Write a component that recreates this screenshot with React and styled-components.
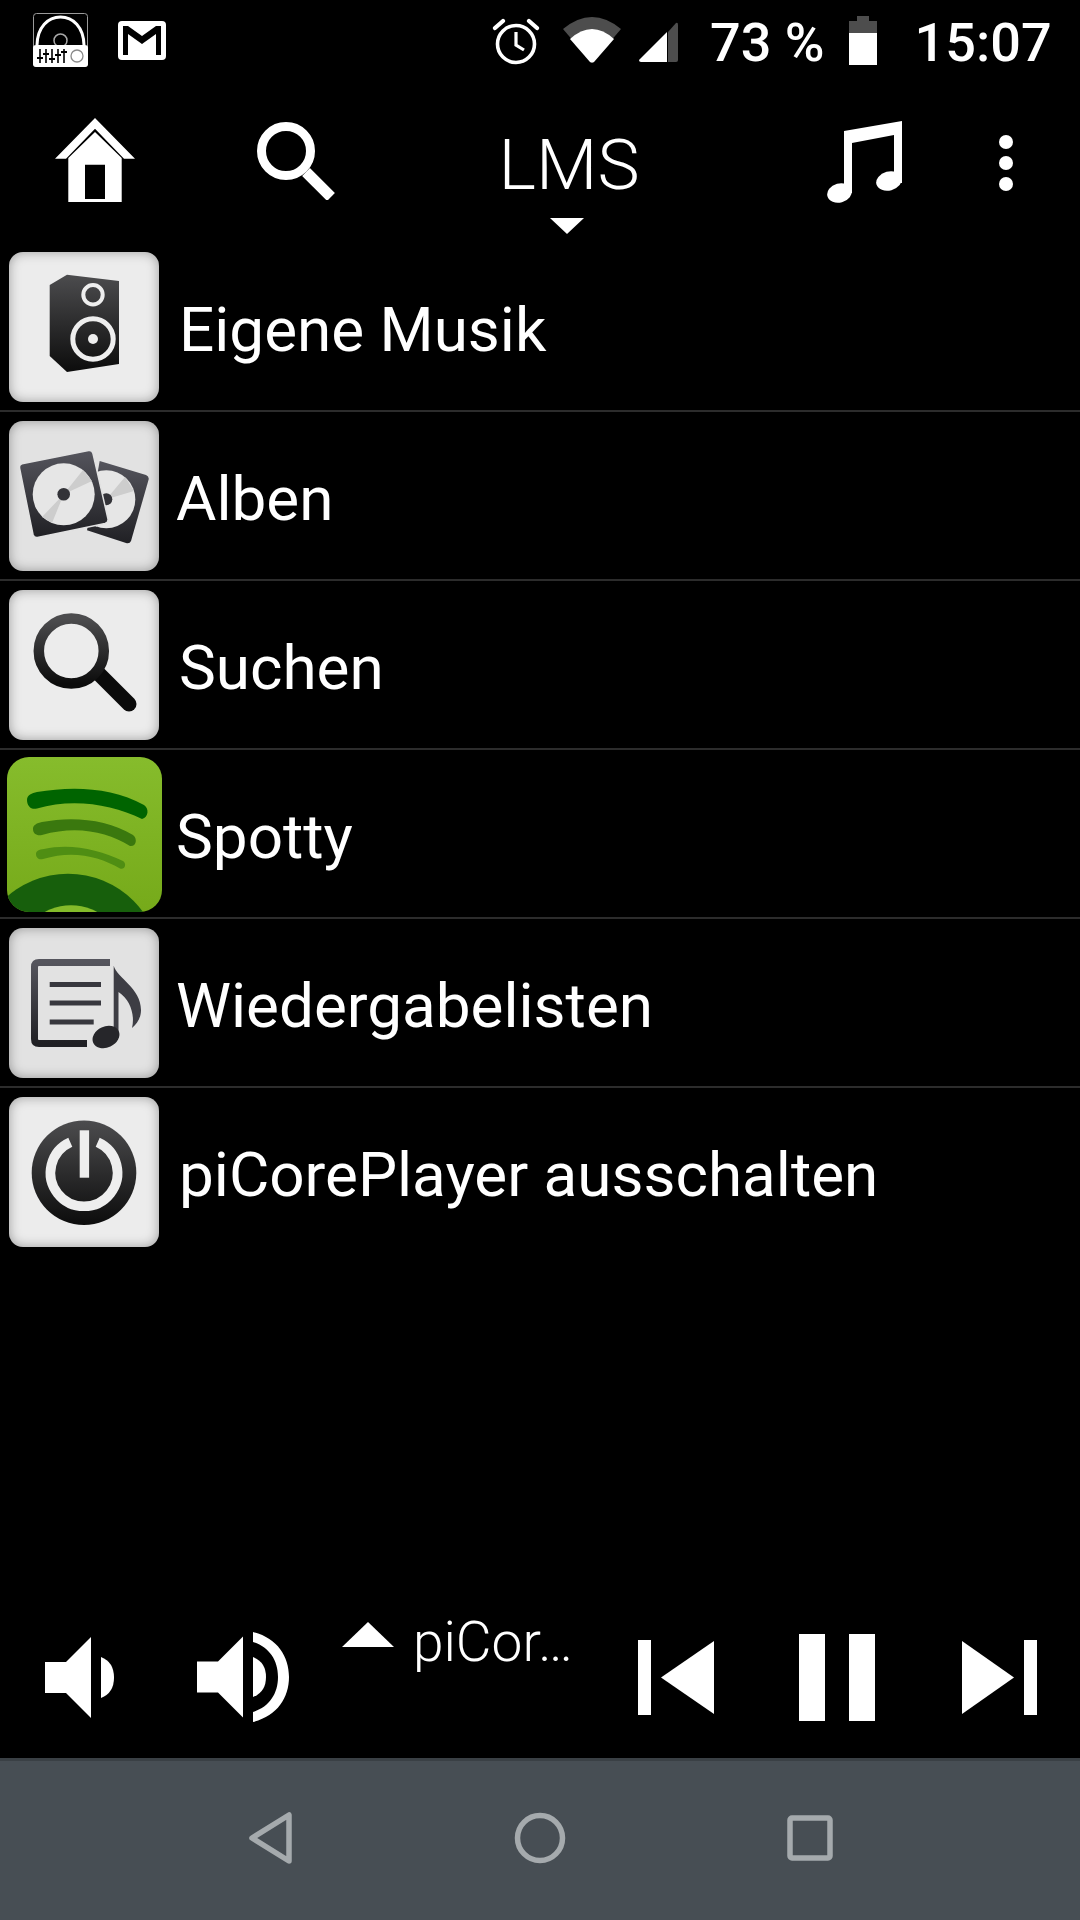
import React from 'react';
import styled, { createGlobalStyle } from 'styled-components';

const GlobalStyle = createGlobalStyle`
  html, body {
    margin: 0;
    padding: 0;
    background: #000;
  }
  body {
    font-family: Roboto, "Liberation Sans", sans-serif;
  }
`;

const Page = styled.div`
  width: 1080px;
  height: 1920px;
  display: flex;
  flex-direction: column;
  background: #000;
  color: #fff;
  overflow: hidden;
`;

const Glyph = styled.svg`
  display: block;
  flex: none;
  margin-left: ${(p) => p.$ml || 0}px;
  margin-top: ${(p) => p.$mt || 0}px;
`;

const StatusBar = styled.div`
  height: 72px;
  flex: none;
  display: flex;
  align-items: flex-start;
`;

const StatusText = styled.span`
  flex: none;
  margin-left: ${(p) => p.$ml}px;
  margin-top: 13px;
  font-size: 54px;
  font-weight: 500;
  line-height: 60px;
  white-space: nowrap;
`;

const Toolbar = styled.div`
  height: 171px;
  flex: none;
  display: flex;
  align-items: flex-start;
`;

const Source = styled.div`
  flex: none;
  width: 136px;
  margin-left: 166px;
  display: flex;
  flex-direction: column;
  align-items: center;
`;

const SourceName = styled.span`
  margin-top: 51px;
  font-size: 71px;
  font-weight: 300;
  line-height: 84px;
`;

const SourceArrow = styled.span`
  width: 0;
  height: 0;
  margin-top: 11px;
  margin-left: -4px;
  border-left: 17px solid transparent;
  border-right: 17px solid transparent;
  border-top: 16px solid #fff;
`;

const List = styled.div`
  flex: 1;
`;

const Row = styled.div`
  height: 167px;
  display: flex;
  align-items: flex-start;
  border-bottom: 2px solid #2c2c2c;
  &:last-child {
    border-bottom: none;
  }
`;

const Tile = styled.div`
  width: 150px;
  height: 150px;
  flex: none;
  margin: 9px 0 0 9px;
  border-radius: 14px;
  background: ${(p) => (p.$dim ? '#e2e2e2' : '#ececec')};
  box-shadow: inset 0 0 12px rgba(0, 0, 0, 0.34);
`;

const SpotifyTile = styled.div`
  width: 155px;
  height: 155px;
  flex: none;
  margin: 7px 0 0 7px;
  border-radius: 22px;
  overflow: hidden;
`;

const RowLabel = styled.span`
  align-self: center;
  margin-top: 6px;
  margin-left: ${(p) => p.$ml}px;
  font-size: 62px;
  line-height: 70px;
  white-space: nowrap;
`;

const Player = styled.div`
  height: 162px;
  flex: none;
  display: flex;
  align-items: center;
`;

const NowPlaying = styled.div`
  flex: none;
  width: 296px;
  margin-left: 53px;
  align-self: flex-start;
  display: flex;
  align-items: flex-start;
`;

const UpArrow = styled.span`
  flex: none;
  width: 0;
  height: 0;
  margin-top: 26px;
  border-left: 26px solid transparent;
  border-right: 26px solid transparent;
  border-bottom: 25px solid #fff;
`;

const TrackName = styled.span`
  margin-left: 19px;
  margin-top: 14px;
  font-size: 55px;
  font-weight: 300;
  line-height: 64px;
  white-space: nowrap;
`;

const NavBar = styled.div`
  height: 162px;
  flex: none;
  box-sizing: border-box;
  display: flex;
  align-items: flex-start;
  background: #474e54;
  border-top: 3px solid #3a4045;
`;

const StatusFill = styled.span`
  flex: 1;
`;

const RadioIcon = () => (
  <Glyph $ml={33} $mt={13} width="55" height="54" viewBox="0 0 55 54">
    <rect x="0.5" y="0.5" width="54" height="53" rx="3" fill="#000" stroke="#9a9a9a" />
    <path d="M4 32 C4.5 14 15 4 27.5 4 C40 4 50.5 14 51 32" fill="none" stroke="#fff" strokeWidth="3" />
    <circle cx="27.5" cy="27.5" r="6.5" fill="none" stroke="#a8a8a8" strokeWidth="1.5" />
    <path d="M0 35 Q0 32 3 32 H52 Q55 32 55 35 V51 Q55 54 52 54 H3 Q0 54 0 51 Z" fill="#fff" />
    <g stroke="#000" strokeWidth="1.6">
      <path d="M7 36 V50 M13 36 V50 M19 36 V50 M25 36 V50 M31 36 V50" />
    </g>
    <path d="M4 44 H10 V46 H4 Z M10 40 H16 V42 H10 Z M16 45 H22 V47 H16 Z M22 41 H28 V43 H22 Z M28 38 H34 V40 H28 Z" fill="#000" />
    <circle cx="44" cy="43" r="6" fill="#fff" stroke="#8a8a8a" strokeWidth="1.3" />
  </Glyph>
);

const MailIcon = () => (
  <Glyph $ml={30} $mt={21} width="48" height="39" viewBox="0 0 48 39">
    <rect width="48" height="39" rx="4" fill="#fff" />
    <path d="M5 34 H10 V13 L24 23 L38 13 V34 H43 V5 H38 L24 15 L10 5 H5 Z" fill="#000" />
  </Glyph>
);

const AlarmIcon = () => (
  <Glyph $ml={326} $mt={17} width="48" height="48" viewBox="0 0 48 48">
    <circle cx="24" cy="27" r="18.5" fill="none" stroke="#fff" strokeWidth="3.6" />
    <path d="M24 15 V28 L32 33" fill="none" stroke="#fff" strokeWidth="3.2" />
    <path d="M3 11 L11 4 M45 11 L37 4" stroke="#fff" strokeWidth="4.2" strokeLinecap="round" />
  </Glyph>
);

const WifiIcon = () => (
  <Glyph $ml={23} $mt={17} width="58" height="46" viewBox="0 0 58 46">
    <path d="M0 12 Q29 -12 58 12 L29 46 Z" fill="#4d4d4d" />
    <path d="M7 22 Q29 2 51 22 L31 45 Q29 46 27 45 Z" fill="#fff" />
  </Glyph>
);

const SignalIcon = () => (
  <Glyph $ml={18} $mt={22} width="39" height="40" viewBox="0 0 39 40">
    <path d="M29 10 L37 1 Q39 0 39 3 V38 Q39 40 37 40 H29 Z" fill="#4d4d4d" />
    <path d="M0 38 L28 10 V40 H2 Q0 40 0 38 Z" fill="#fff" />
  </Glyph>
);

const BatteryIcon = () => (
  <Glyph $ml={24} $mt={16} width="28" height="49" viewBox="0 0 28 49">
    <path d="M8 0 H20 V5 H28 V17 H0 V5 H8 Z" fill="#4d4d4d" />
    <rect y="17" width="28" height="32" fill="#fff" />
  </Glyph>
);

const HomeIcon = () => (
  <Glyph $ml={55} $mt={46} width="80" height="84" viewBox="0 0 80 84">
    <path d="M0 40.7 L40 0 L80 40.7 H69 L40 10.7 L11 40.7 Z" fill="#fff" />
    <path d="M13.3 40 L40 14 L66.7 40 V84 H13.3 Z M30 46.7 V81 H50 V46.7 Z" fill="#fff" fillRule="evenodd" />
  </Glyph>
);

const SearchIcon = () => (
  <Glyph $ml={122} $mt={50} width="78" height="78" viewBox="0 0 78 78">
    <circle cx="29" cy="29" r="24.5" fill="none" stroke="#fff" strokeWidth="9" />
    <path d="M49 50 L74 75" stroke="#fff" strokeWidth="11" />
  </Glyph>
);

const NoteIcon = () => (
  <Glyph $ml={190} $mt={49} width="77" height="82" viewBox="0 0 77 82">
    <path d="M17 10 L75 0 V62 H67 V14 L25 22 V72 H17 Z" fill="#fff" />
    <ellipse cx="12.5" cy="72" rx="12.5" ry="9.5" transform="rotate(-15 12.5 72)" fill="#fff" />
    <ellipse cx="62" cy="60" rx="13" ry="9.5" transform="rotate(-15 62 60)" fill="#fff" />
  </Glyph>
);

const MenuIcon = () => (
  <Glyph $ml={94} $mt={63} width="16" height="56" viewBox="0 0 16 56">
    <circle cx="8" cy="7" r="7" fill="#fff" />
    <circle cx="8" cy="28" r="7" fill="#fff" />
    <circle cx="8" cy="49" r="7" fill="#fff" />
  </Glyph>
);

const SvgDefs = () => (
  <svg width="0" height="0" style={{ position: 'absolute' }}>
    <defs>
      <linearGradient id="darkFill" x1="0" y1="0" x2="0" y2="1">
        <stop offset="0" stopColor="#4c4c4e" />
        <stop offset="1" stopColor="#0c0c0c" />
      </linearGradient>
      <linearGradient id="slateFill" x1="0" y1="0" x2="0" y2="1">
        <stop offset="0" stopColor="#55555d" />
        <stop offset="1" stopColor="#202024" />
      </linearGradient>
      <linearGradient id="spotFill" x1="0" y1="0" x2="0" y2="1">
        <stop offset="0" stopColor="#86bc2c" />
        <stop offset="1" stopColor="#76aa1a" />
      </linearGradient>
    </defs>
  </svg>
);

const SpeakerTile = () => (
  <Tile>
    <svg width="150" height="150" viewBox="0 0 150 150">
      <path d="M40.7 33 L58 22.7 L110 29 V112 L58 120 L40.7 104 Z" fill="url(#darkFill)" />
      <circle cx="84" cy="42.7" r="9.7" fill="none" stroke="#eee" strokeWidth="4" />
      <circle cx="84" cy="87" r="20.2" fill="none" stroke="#eee" strokeWidth="5" />
      <circle cx="84" cy="87" r="5" fill="#eee" />
    </svg>
  </Tile>
);

const AlbumsTile = () => (
  <Tile $dim>
    <svg width="150" height="150" viewBox="0 0 150 150">
      <path d="M90.7 40 L137 54 Q140.5 55.5 139.5 59 L122 120 Q120.7 123 117 122 L78 109.3 Z" fill="url(#slateFill)" />
      <circle cx="97.3" cy="78.3" r="29" fill="#e6e6e6" />
      <path d="M97.3 78.3 L116 56 L125 70 Z M97.3 78.3 L78 100 L88 106 Z" fill="#cdcdcd" />
      <circle cx="97.3" cy="78.3" r="6" fill="#333338" />
      <path d="M13 42.8 L79.5 29.6 Q83 29 84 32.5 L99 98 Q99.5 101.5 96 102.5 L28.5 116.5 Q25 117 24 113.5 L10.5 47 Q10 43.5 13 42.8 Z" fill="url(#slateFill)" stroke="#e2e2e2" strokeWidth="1.5" />
      <circle cx="54.7" cy="73.3" r="31" fill="#e6e6e6" />
      <path d="M54.7 73.3 L74 49 L83 60 Z M54.7 73.3 L33 96 L43 102 Z" fill="#cdcdcd" />
      <circle cx="54.7" cy="73.3" r="6.3" fill="#333338" />
    </svg>
  </Tile>
);

const LensTile = () => (
  <Tile>
    <svg width="150" height="150" viewBox="0 0 150 150">
      <path d="M90 84 L120 114" stroke="#0a0a0a" strokeWidth="15" strokeLinecap="round" />
      <circle cx="62.3" cy="61" r="32.5" fill="none" stroke="url(#darkFill)" strokeWidth="10.5" />
    </svg>
  </Tile>
);

const SpottyTile = () => (
  <SpotifyTile>
    <svg width="155" height="155" viewBox="0 0 155 155" style={{ display: 'block' }}>
      <rect width="155" height="155" fill="url(#spotFill)" />
      <path d="M20 43 C20 38 25 36 30 35 C65 29 105 30 137 48 C142 51 142 60 135 62 C105 47 65 41 30 51.5 C24 53 20 49 20 43 Z" fill="#006400" />
      <path d="M26 72 C26 68 30 66 35 65 C65 59 100 62 126 78 C131 82 129 90 123 89 C100 75 70 68 35 78 C30 79 26 77 26 72 Z" fill="#3a780e" />
      <path d="M29 97 C29 94 32 92.5 37 92 C62 86 92 92 116 104 C120 107 118 113 113 111.5 C92 99 65 93 36 102 C32 103 29 101 29 97 Z" fill="#4f8e13" />
      <circle cx="61" cy="209.3" r="92.6" fill="#175f0c" />
      <circle cx="64" cy="202" r="53.8" fill="#84bb2a" />
    </svg>
  </SpotifyTile>
);

const PlaylistTile = () => (
  <Tile $dim>
    <svg width="150" height="150" viewBox="0 0 150 150">
      <path d="M101 34.5 H30 Q25.5 34.5 25.5 39 V111 Q25.5 115.5 30 115.5 H78" fill="none" stroke="url(#slateFill)" strokeWidth="7" />
      <path d="M40.7 54 H92 V59 H40.7 Z M40.7 72.5 H92 V77.5 H40.7 Z M40.7 91.5 H84.7 V96.5 H40.7 Z" fill="#38383e" />
      <path d="M104.7 37.7 C108 50 132 60 132 82 C132 90 128 96 123 100 C126 88 122 72 109.5 64 L109.5 110 L104.7 110 Z" fill="#3d3d44" />
      <ellipse cx="97" cy="109" rx="14" ry="10.5" transform="rotate(-25 97 109)" fill="#26262a" />
    </svg>
  </Tile>
);

const PowerTile = () => (
  <Tile>
    <svg width="150" height="150" viewBox="0 0 150 150">
      <circle cx="75" cy="75.7" r="52.3" fill="url(#darkFill)" />
      <path d="M88.7 45.2 A33.5 33.5 0 1 1 61.3 45.2" fill="none" stroke="#eee" strokeWidth="9.7" />
      <rect x="70.7" y="33.3" width="9.4" height="47.4" fill="#eee" />
    </svg>
  </Tile>
);

const VolumeDown = () => (
  <Glyph $ml={45} width="69" height="81" viewBox="0 0 69 81">
    <path d="M0 25 H21 L46 0 V81 L21 56 H0 Z" fill="#fff" />
    <path d="M56 20 Q69 25 69 40.5 Q69 56 56 61 Z" fill="#fff" />
  </Glyph>
);

const VolumeUp = () => (
  <Glyph $ml={83} width="92" height="90" viewBox="0 0 92 90">
    <path d="M0 29.5 H21 L46 4.5 V85.5 L21 60.5 H0 Z" fill="#fff" />
    <path d="M56 25 Q69 30 69 45 Q69 60 56 65 Z" fill="#fff" />
    <path d="M56 0 C80 6 92 24 92 45 C92 66 80 84 56 90 V80 C72 75 81 62 81 45 C81 28 72 15 56 10 Z" fill="#fff" />
  </Glyph>
);

const PrevIcon = () => (
  <Glyph width="76" height="75" viewBox="0 0 76 75">
    <rect width="13" height="75" fill="#fff" />
    <path d="M23 37.5 L76 1 V74 Z" fill="#fff" />
  </Glyph>
);

const PauseIcon = () => (
  <Glyph $ml={85} width="76" height="87" viewBox="0 0 76 87">
    <rect width="26" height="87" fill="#fff" />
    <rect x="50" width="26" height="87" fill="#fff" />
  </Glyph>
);

const NextIcon = () => (
  <Glyph $ml={87} width="75" height="75" viewBox="0 0 75 75">
    <path d="M0 1 L52 37.5 L0 74 Z" fill="#fff" />
    <rect x="62" width="13" height="75" fill="#fff" />
  </Glyph>
);

const BackKey = () => (
  <Glyph $ml={249} $mt={51} width="43" height="52" viewBox="0 0 43 52">
    <path d="M40 3 V49 L3 26 Z" fill="none" stroke="#a5aaad" strokeWidth="5.5" strokeLinejoin="round" />
  </Glyph>
);

const HomeKey = () => (
  <Glyph $ml={222} $mt={51} width="52" height="52" viewBox="0 0 52 52">
    <circle cx="26" cy="26" r="22.5" fill="none" stroke="#a5aaad" strokeWidth="5.5" />
  </Glyph>
);

const RecentKey = () => (
  <Glyph $ml={221} $mt={54} width="46" height="46" viewBox="0 0 46 46">
    <rect x="3" y="3" width="40" height="40" rx="2" fill="none" stroke="#a5aaad" strokeWidth="5.5" />
  </Glyph>
);

const rows = [
  { id: 'music', label: 'Eigene Musik', icon: <SpeakerTile />, ml: 20 },
  { id: 'albums', label: 'Alben', icon: <AlbumsTile />, ml: 17 },
  { id: 'search', label: 'Suchen', icon: <LensTile />, ml: 20 },
  { id: 'spotty', label: 'Spotty', icon: <SpottyTile />, ml: 14 },
  { id: 'lists', label: 'Wiedergabelisten', icon: <PlaylistTile />, ml: 17 },
  { id: 'off', label: 'piCorePlayer ausschalten', icon: <PowerTile />, ml: 20 },
];

const App = () => (
  <Page>
    <GlobalStyle />
    <SvgDefs />
    <StatusBar>
      <RadioIcon />
      <MailIcon />
      <AlarmIcon />
      <WifiIcon />
      <SignalIcon />
      <StatusText $ml={32}>73 %</StatusText>
      <BatteryIcon />
      <StatusText $ml={38}>15:07</StatusText>
      <StatusFill />
    </StatusBar>
    <Toolbar>
      <HomeIcon />
      <SearchIcon />
      <Source>
        <SourceName>LMS</SourceName>
        <SourceArrow />
      </Source>
      <NoteIcon />
      <MenuIcon />
    </Toolbar>
    <List>
      {rows.map((row) => (
        <Row key={row.id}>
          {row.icon}
          <RowLabel $ml={row.ml}>{row.label}</RowLabel>
        </Row>
      ))}
    </List>
    <Player>
      <VolumeDown />
      <VolumeUp />
      <NowPlaying>
        <UpArrow />
        <TrackName>piCor…</TrackName>
      </NowPlaying>
      <PrevIcon />
      <PauseIcon />
      <NextIcon />
    </Player>
    <NavBar>
      <BackKey />
      <HomeKey />
      <RecentKey />
    </NavBar>
  </Page>
);

export default App;
